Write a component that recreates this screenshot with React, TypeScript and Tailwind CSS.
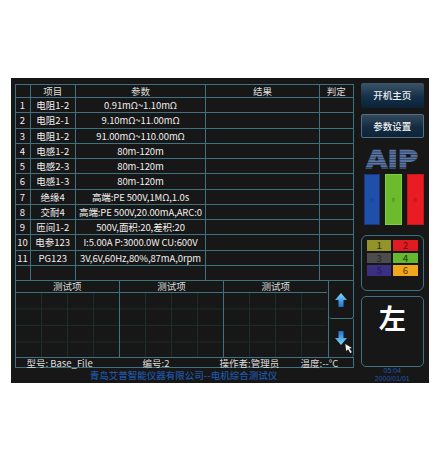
import React from 'react';

const rows = [
  ['1', '电阻1-2', '0.91mΩ~1.10mΩ'],
  ['2', '电阻2-1', '9.10mΩ~11.00mΩ'],
  ['3', '电阻1-2', '91.00mΩ~110.00mΩ'],
  ['4', '电感1-2', '80m-120m'],
  ['5', '电感2-3', '80m-120m'],
  ['6', '电感1-3', '80m-120m'],
  ['7', '绝缘4', '高端:PE 500V,1MΩ,1.0s'],
  ['8', '交耐4', '高端:PE 500V,20.00mA,ARC:0'],
  ['9', '匝间1-2', '500V,面积:20,差积:20'],
  ['10', '电参123', 'I:5.00A P:3000.0W CU:600V'],
  ['11', 'PG123', '3V,6V,60Hz,80%,87mA,0rpm'],
  ['', '', ''],
];

const swatches = [
  { n: '1', box: 'bg-[#93932a]', text: 'text-[#3d3d10]' },
  { n: '2', box: 'bg-[#e01b22]', text: 'text-[#7a1015]' },
  { n: '3', box: 'bg-[#4c4c4c]', text: 'text-[#2c2c2c]' },
  { n: '4', box: 'bg-[#66b82e]', text: 'text-[#1e4d10]' },
  { n: '5', box: 'bg-[#3a2f80]', text: 'text-[#251d55]' },
  { n: '6', box: 'bg-[#f2a81d]', text: 'text-[#6b4708]' },
];

const Arrow = ({ down, id }: { down?: boolean; id: string }) => (
  <svg width="12" height="14" viewBox="0 0 12 14">
    <defs>
      <linearGradient id={id} x1="0" y1="0" x2="0" y2="1">
        <stop offset="0" stopColor={down ? '#1f6fd0' : '#7fdcf5'} />
        <stop offset="1" stopColor={down ? '#7fdcf5' : '#1f6fd0'} />
      </linearGradient>
    </defs>
    <polygon
      points={down ? '3.5,0 8.5,0 8.5,7 12,7 6,14 0,7 3.5,7' : '6,0 12,7 8.5,7 8.5,14 3.5,14 3.5,7 0,7'}
      fill={`url(#${id})`}
    />
  </svg>
);

const Chart = ({ last }: { last?: boolean }) => (
  <div className={`flex flex-col flex-1 min-w-0 ${last ? '' : 'border-r border-[#3f7280]'}`}>
    <div className="h-[11.5px] flex items-center justify-center border-b border-[#3f7280] text-[9.5px] text-[#dedede]">测试项</div>
    <div className="flex-1 bg-[linear-gradient(#1c2e27_1px,transparent_1px),linear-gradient(90deg,#1c2e27_1px,transparent_1px)] bg-[length:26px_16.5px] bg-[position:-1px_-1px]" />
  </div>
);

const AipLogo = () => (
  <svg width="56" height="34" viewBox="0 0 56 34" className="shrink-0">
    <defs>
      <pattern id="aipStripes" width="4" height="2.6" patternUnits="userSpaceOnUse">
        <rect width="4" height="1.7" fill="#5d78a8" />
        <rect y="1.7" width="4" height="0.9" fill="#2b3a55" />
      </pattern>
    </defs>
    <text x="28" y="26" textAnchor="middle" textLength="52" lengthAdjust="spacingAndGlyphs" fontFamily="DejaVu Sans, sans-serif" fontWeight="700" fontSize="24" fill="url(#aipStripes)" stroke="url(#aipStripes)" strokeWidth="1">
      AIP
    </text>
  </svg>
);

export default function App() {
  return (
    <div className="w-[440px] h-[460px] bg-white pt-[78px] pl-[11px] font-['Noto_Sans_CJK_SC','Noto_Sans',sans-serif]">
      <div className="w-[418px] h-[305px] bg-[#171717] flex text-[#efefef]">
        {/* left side */}
        <div className="w-[342.5px] pl-[3.5px] pt-[6px] flex flex-col">
          <div className="border-t border-l border-r border-[#3f7280]">
            <div className="grid grid-cols-[15px_45.5px_130px_114px_1fr] h-[13px] border-b border-[#3f7280] text-[9.5px] leading-[12px] text-center text-[#dedede]">
              <div className="border-r border-[#3f7280]" />
              <div className="border-r border-[#3f7280]">项目</div>
              <div className="border-r border-[#3f7280]">参数</div>
              <div className="border-r border-[#3f7280]">结果</div>
              <div>判定</div>
            </div>
            {rows.map((r, i) => (
              <div key={i} className="grid grid-cols-[15px_45.5px_130px_114px_1fr] h-[15.25px] border-b border-[#3f7280] text-[9.5px] leading-[14px] text-center whitespace-nowrap">
                <div className="border-r border-[#3f7280]">{r[0]}</div>
                <div className="border-r border-[#3f7280]">{r[1]}</div>
                <div className="border-r border-[#3f7280] tracking-[-0.1px]">{r[2]}</div>
                <div className="border-r border-[#3f7280]" />
                <div />
              </div>
            ))}
          </div>

          {/* charts and arrow buttons */}
          <div className="h-[77px] flex border-l border-b border-[#3f7280]">
            <div className="w-[313px] flex border-r border-[#3f7280]">
              <Chart />
              <Chart />
              <Chart last />
            </div>
            <div className="flex-1 relative flex flex-col">
              <div className="h-[38px] flex items-center justify-center rounded-b-[3px] border-r border-b border-[#3f7280]">
                <Arrow id="arrowUp" />
              </div>
              <div className="flex-1 flex items-center justify-center rounded-b-[3px] border-r border-[#3f7280]">
                <Arrow down id="arrowDown" />
              </div>
              <svg className="absolute left-[16px] top-[63px]" width="8" height="9" viewBox="0 0 9 11">
                <polygon points="0,0 8,5 5,5.5 8,10 6,11 3.5,6.5 1,8.5" fill="#f2f2f2" />
              </svg>
            </div>
          </div>

          {/* status line */}
          <div className="h-[10.5px] flex border-l border-r border-b border-[#3f7280] text-[9.5px] leading-[10px] text-[#dedede] whitespace-nowrap">
            <div className="w-[127px] pl-[11px]">型号: Base_File</div>
            <div className="w-[77px]">编号:2</div>
            <div className="w-[81px]">操作者:管理员</div>
            <div>温度:--°C</div>
          </div>

          <div className="h-[15px] flex items-center justify-center pr-[1px] text-[9.5px] font-medium text-[#1f55a8] whitespace-nowrap">
            青岛艾普智能仪器有限公司--电机综合测试仪
          </div>
        </div>

        {/* right side */}
        <div className="flex-1 pl-[7.5px] pr-[5.5px] pt-[5px] flex flex-col items-stretch">
          <button className="h-[25px] rounded-[2px] bg-[linear-gradient(#3c5566,#15304a_55%,#0c2238)] text-[9.5px] font-medium text-[#eeeeee]">开机主页</button>
          <button className="h-[24px] mt-[6px] rounded-[2px] border border-[#4f7085] bg-[linear-gradient(#34495a,#142c42_55%,#0e2438)] text-[9.5px] font-medium text-[#eeeeee]">参数设置</button>

          <div className="h-[20px] mt-[11px] flex items-center justify-center">
            <AipLogo />
          </div>

          <div className="mt-[5px] h-[51px] flex justify-between pl-[2.5px]">
            <div className="w-[16.5px] bg-[#1f4fa8] border border-[#17397a] flex items-center justify-center text-[5px] text-[#17397a]">0</div>
            <div className="w-[16.5px] bg-[#6cbb2c] border border-[#7fd034] flex items-center justify-center text-[5px] text-[#2f6a1a]">0</div>
            <div className="w-[16.5px] bg-[#e81c22] border border-[#c4181d] flex items-center justify-center text-[5px] text-[#8a1014]">0</div>
          </div>

          <div className="mt-[10.5px] h-[56px] rounded-[6px] border border-[#3f7280] pt-[4px] px-[5px]">
            <div className="grid grid-cols-2 gap-x-[2px] gap-y-[2px]">
              {swatches.map(s => (
                <div key={s.n} className={`h-[10.5px] flex items-center justify-center text-[9.5px] font-medium ${s.box} ${s.text}`}>
                  {s.n}
                </div>
              ))}
            </div>
          </div>

          <div className="mt-[5px] h-[71px] rounded-[5px] border border-[#3f7280] flex justify-center pt-[3px]">
            <span className="text-[27px] leading-[36px] font-bold text-white">左</span>
          </div>

          <div className="text-center font-['Liberation_Sans',sans-serif] text-[7px] leading-[8px] text-[#1f55a8] whitespace-nowrap">
            <div>05:04</div>
            <div>2000/01/01</div>
          </div>
        </div>
      </div>
    </div>
  );
}
